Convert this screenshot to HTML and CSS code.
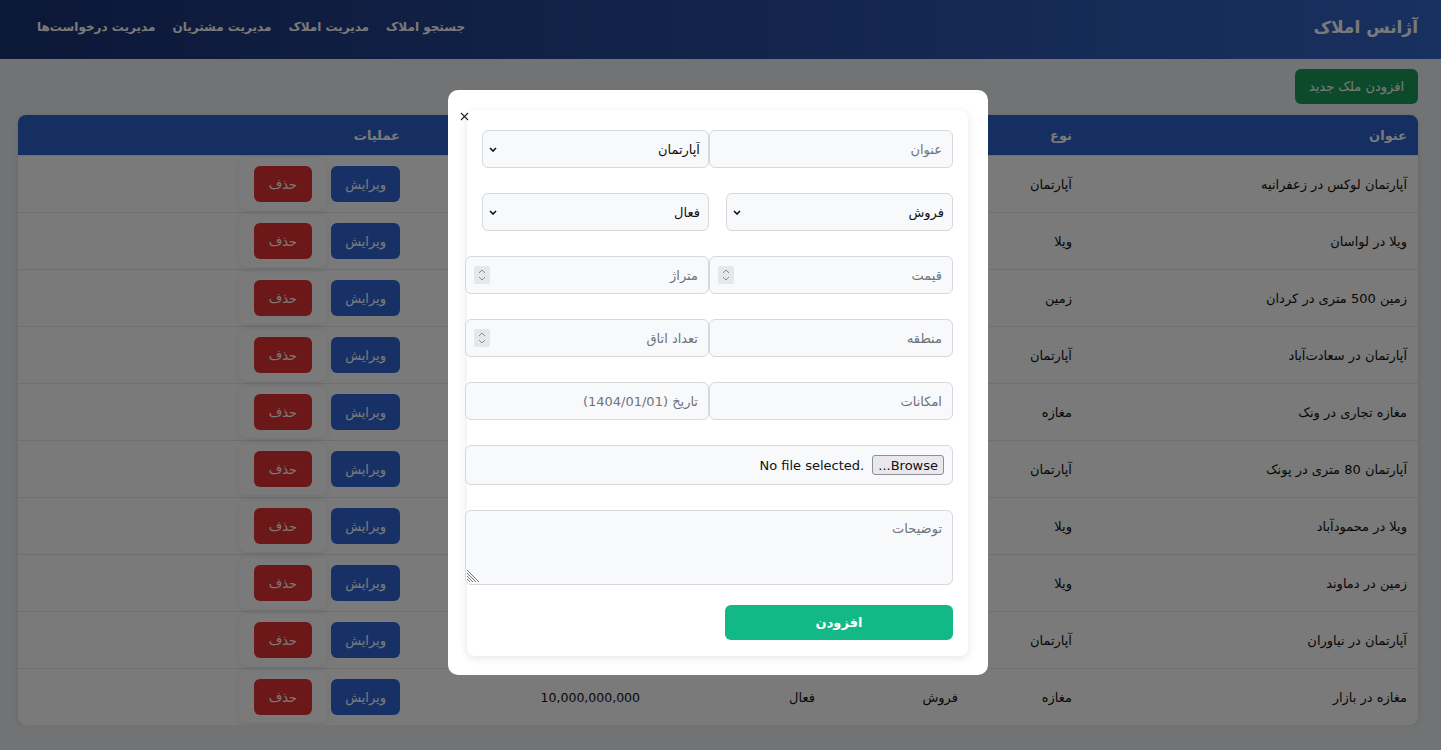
FILE: index.html
```html
<!DOCTYPE html>
<html lang="fa" dir="rtl">
<head>
  <meta charset="UTF-8" />
  <meta name="viewport" content="width=device-width, initial-scale=1.0"/>
  <title>آژانس املاک</title>
  <link rel="stylesheet" href="styles.css">
</head>
<body>

  <!-- HEADER -->
  <header class="topbar">
    <h1 class="brand">آژانس املاک</h1>
    <nav class="nav">
      <a href="#">جستجو املاک</a>
      <a href="#">مدیریت املاک</a>
      <a href="#">مدیریت مشتریان</a>
      <a href="#">مدیریت درخواست‌ها</a>
    </nav>
  </header>

  <!-- PROPERTY LIST -->
  <main class="page">
    <div class="toolbar">
      <button class="btn btn-add">افزودن ملک جدید</button>
    </div>

    <div class="table-wrap">
      <table class="props">
        <thead>
          <tr>
            <th class="c-title">عنوان</th>
            <th class="c-type">نوع</th>
            <th class="c-deal">معامله</th>
            <th class="c-status">وضعیت</th>
            <th class="c-price">قیمت</th>
            <th class="c-actions">عملیات</th>
          </tr>
        </thead>
        <tbody id="rows"></tbody>
      </table>
    </div>
  </main>

  <!-- ADD PROPERTY MODAL -->
  <div class="overlay">
    <div class="modal">
      <button class="close" type="button" aria-label="بستن">
        <svg width="9" height="9" viewBox="0 0 9 9"><path d="M1 1L8 8M8 1L1 8" stroke="#222" stroke-width="1.1" fill="none"/></svg>
      </button>

      <form class="prop-form">
        <input class="field" type="text" placeholder="عنوان" />
        <select class="field select">
          <option>آپارتمان</option>
          <option>ویلا</option>
          <option>زمین</option>
          <option>مغازه</option>
        </select>

        <select class="field select">
          <option>فروش</option>
          <option>اجاره</option>
        </select>
        <select class="field select">
          <option>فعال</option>
          <option>غیرفعال</option>
        </select>

        <div class="field num">
          <input type="text" placeholder="قیمت" />
          <span class="spin"><svg width="10" height="14" viewBox="0 0 10 14"><path d="M2 5L5 2L8 5M2 9L5 12L8 9" stroke="#8a8d93" stroke-width="1" fill="none"/></svg></span>
        </div>
        <div class="field num">
          <input type="text" placeholder="متراژ" />
          <span class="spin"><svg width="10" height="14" viewBox="0 0 10 14"><path d="M2 5L5 2L8 5M2 9L5 12L8 9" stroke="#8a8d93" stroke-width="1" fill="none"/></svg></span>
        </div>

        <input class="field" type="text" placeholder="منطقه" />
        <div class="field num">
          <input type="text" placeholder="تعداد اتاق" />
          <span class="spin"><svg width="10" height="14" viewBox="0 0 10 14"><path d="M2 5L5 2L8 5M2 9L5 12L8 9" stroke="#8a8d93" stroke-width="1" fill="none"/></svg></span>
        </div>

        <input class="field" type="text" placeholder="امکانات" />
        <input class="field" type="text" placeholder="تاریخ (1404/01/01)" />

        <div class="field file full">
          <button class="browse" type="button">Browse...</button>
          <span class="file-name" dir="ltr">No file selected.</span>
        </div>

        <div class="area-wrap full">
          <textarea class="field area" placeholder="توضیحات"></textarea>
          <svg class="grip" width="14" height="14" viewBox="0 0 14 14"><path d="M1 1L13 13M1 4L10 13M1 7L7 13M1 10L4 13" stroke="#777" stroke-width="1" fill="none"/></svg>
        </div>

        <button class="btn btn-submit" type="button">افزودن</button>
      </form>
    </div>
  </div>

  <script>
    // Properties shown in the list
    const properties = [
      { title: 'آپارتمان لوکس در زعفرانیه', type: 'آپارتمان', deal: 'فروش', status: 'فعال', price: '25,000,000,000' },
      { title: 'ویلا در لواسان', type: 'ویلا', deal: 'فروش', status: 'فعال', price: '40,000,000,000' },
      { title: 'زمین 500 متری در کردان', type: 'زمین', deal: 'فروش', status: 'فعال', price: '8,000,000,000' },
      { title: 'آپارتمان در سعادت‌آباد', type: 'آپارتمان', deal: 'اجاره', status: 'فعال', price: '120,000,000' },
      { title: 'مغازه تجاری در ونک', type: 'مغازه', deal: 'فروش', status: 'فعال', price: '30,000,000,000' },
      { title: 'آپارتمان 80 متری در پونک', type: 'آپارتمان', deal: 'فروش', status: 'فعال', price: '6,500,000,000' },
      { title: 'ویلا در محمودآباد', type: 'ویلا', deal: 'فروش', status: 'فعال', price: '15,000,000,000' },
      { title: 'زمین در دماوند', type: 'ویلا', deal: 'فروش', status: 'فعال', price: '3,000,000,000' },
      { title: 'آپارتمان در نیاوران', type: 'آپارتمان', deal: 'فروش', status: 'فعال', price: '35,000,000,000' },
      { title: 'مغازه در بازار', type: 'مغازه', deal: 'فروش', status: 'فعال', price: '10,000,000,000' }
    ];

    // Render table rows
    const tbody = document.getElementById('rows');
    properties.forEach(p => {
      const tr = document.createElement('tr');
      tr.innerHTML = `
        <td>${p.title}</td>
        <td>${p.type}</td>
        <td>${p.deal}</td>
        <td>${p.status}</td>
        <td class="price">${p.price}</td>
        <td>
          <div class="actions">
            <button class="btn btn-edit">ویرایش</button>
            <form class="del-form">
              <button class="btn btn-del" type="button">حذف</button>
            </form>
          </div>
        </td>
      `;
      tbody.appendChild(tr);
    });
  </script>

</body>
</html>
```

FILE: styles.css
```css
body { margin: 0; font-family: "DejaVu Sans", sans-serif; background: #eef0f2; color: #111; }
button, input, select, textarea { font-family: inherit; }

/* header */
.topbar { height: 59px; box-sizing: border-box; padding: 0 23px 5px 37px; display: flex; align-items: center; justify-content: space-between; background: linear-gradient(to right, #1b3274, #3466c8); color: #fff; }
.brand { margin: 0; font-size: 17px; font-weight: bold; }
.nav { display: flex; gap: 17px; }
.nav a { color: #fff; text-decoration: none; font-size: 12px; font-weight: bold; }

/* list */
.page { padding: 10px 23px 0 18px; }
.toolbar { display: flex; margin-bottom: 11px; }
.btn { border: none; border-radius: 6px; color: #fff; font-size: 13px; cursor: pointer; }
.btn-add { height: 35px; padding: 0 14px; background: #1a9c5a; }

.table-wrap { background: #fff; border-radius: 8px; overflow: hidden; box-shadow: 0 1px 4px rgba(0,0,0,.12); }
.props { width: 100%; border-collapse: collapse; font-size: 13px; }
.props th { height: 40px; padding: 0 11px; background: #2d62cc; color: #fff; font-weight: bold; text-align: right; }
.props td { height: 56px; padding: 0 11px; border-top: 1px solid #e6e8eb; text-align: right; }
.props td.price { font-size: 12.5px; }
.c-title { width: 313px; }
.c-type { width: 92px; }
.c-deal { width: 121px; }
.c-status { width: 153px; }
.c-price { width: 218px; }

.actions { display: flex; align-items: center; gap: 4px; }
.btn-edit { height: 36px; padding: 0 14px; background: #3068d8; }
.del-form { padding: 8px 15px; border-radius: 8px; box-shadow: 0 2px 8px rgba(0,0,0,.08); }
.btn-del { height: 36px; padding: 0 15px; background: #e33434; }

/* modal */
.overlay { position: fixed; inset: 0; background: rgba(0,0,0,.52); display: flex; justify-content: center; align-items: flex-start; padding-top: 90px; }
.modal { position: relative; width: 540px; margin-right: 5px; box-sizing: border-box; padding: 20px 20px 19px 19px; background: #fff; border-radius: 10px; }
.close { position: absolute; top: 22px; left: 12px; padding: 0; border: none; background: none; line-height: 0; cursor: pointer; }

.prop-form { display: grid; grid-template-columns: 244px 244px; row-gap: 25px; padding: 20px 15px 16px 0; background: #fff; border-radius: 8px; box-shadow: 0 2px 10px rgba(0,0,0,.1); }
.field { box-sizing: border-box; width: 100%; height: 38px; padding: 0 10px; border: 1px solid #d5d8dd; border-radius: 6px; background: #f8f9fb; font-size: 13px; color: #111; }
.field::placeholder, .field input::placeholder { color: #6f7278; }
.select { width: 227px; padding: 0 8px 0 24px; appearance: none; background: #f8f9fb url("data:image/svg+xml,%3Csvg xmlns='http://www.w3.org/2000/svg' width='8' height='5' viewBox='0 0 8 5'%3E%3Cpath d='M1 1L4 4L7 1' stroke='%23111' stroke-width='1.6' fill='none'/%3E%3C/svg%3E") no-repeat left 6px center; }
.num { display: flex; align-items: center; gap: 6px; padding-left: 8px; }
.num input { flex: 1; min-width: 0; border: none; background: none; outline: none; font-size: 13px; padding: 0; }
.spin { width: 16px; height: 18px; display: flex; align-items: center; justify-content: center; background: #e6e7ea; border-radius: 2px; }
.full { grid-column: 1 / -1; }
.file { height: 40px; display: flex; align-items: center; gap: 8px; padding: 0 8px; }
.browse { height: 20px; padding: 0 5px; border: 1px solid #8f8f9d; border-radius: 3px; background: #e9e9ed; color: #111; font-size: 13px; }
.file-name { font-size: 13px; }
.area-wrap { display: flex; align-items: flex-end; }
.area { height: 75px; padding: 10px; resize: none; }
.grip { flex: none; margin: 0 -15px 2px 1px; }
.btn-submit { width: 228px; height: 35px; margin-top: -5px; background: #12b886; font-weight: bold; }
```
